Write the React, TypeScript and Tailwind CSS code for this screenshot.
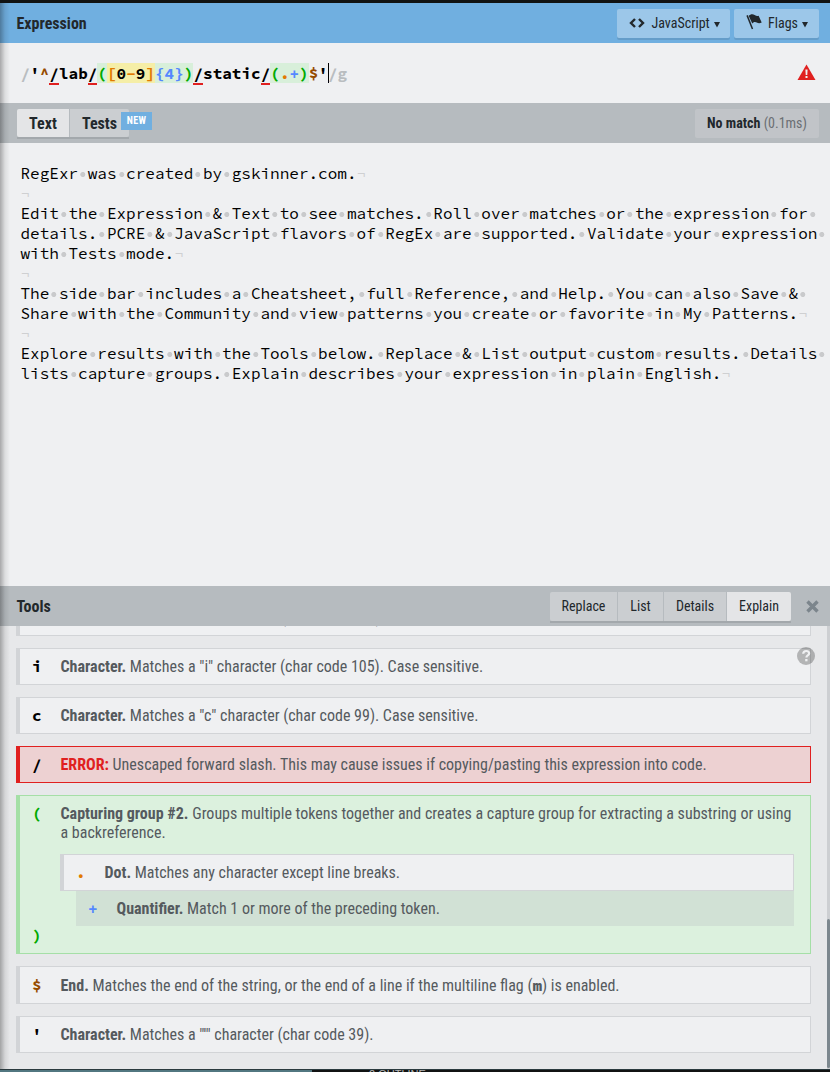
import type { ReactNode } from 'react';
import clsx from 'clsx';

const MONO = "font-['Source_Code_Pro','Noto_Sans_Mono_CJK_SC','Liberation_Mono',monospace] text-base";

const TEXT_LINES = [
  'RegExr was created by gskinner.com.¬',
  '¬',
  'Edit the Expression & Text to see matches. Roll over matches or the expression for ',
  'details. PCRE & JavaScript flavors of RegEx are supported. Validate your expression ',
  'with Tests mode.¬',
  '¬',
  'The side bar includes a Cheatsheet, full Reference, and Help. You can also Save & ',
  'Share with the Community and view patterns you create or favorite in My Patterns.¬',
  '¬',
  'Explore results with the Tools below. Replace & List output custom results. Details ',
  'lists capture groups. Explain describes your expression in plain English.¬',
];

type Token = { text: string; color: string; bg?: string; error?: boolean };

const TOKENS: Token[] = [
  { text: '/', color: 'text-[#b9bdc0]' },
  { text: "'", color: 'text-black' },
  { text: '^', color: 'text-[#964b00]' },
  { text: '/', color: 'text-black', error: true },
  { text: 'lab', color: 'text-black' },
  { text: '/', color: 'text-black', error: true },
  { text: '(', color: 'text-[#0a0]', bg: 'bg-[#d8efda]' },
  { text: '[', color: 'text-[#e17a00]', bg: 'bg-[#f5eea7]' },
  { text: '0', color: 'text-black', bg: 'bg-[#f5eea7]' },
  { text: '-', color: 'text-[#e17a00]', bg: 'bg-[#f5eea7]' },
  { text: '9', color: 'text-black', bg: 'bg-[#f5eea7]' },
  { text: ']', color: 'text-[#e17a00]', bg: 'bg-[#f5eea7]' },
  { text: '{4}', color: 'text-[#58f]', bg: 'bg-[#d8efda]' },
  { text: ')', color: 'text-[#0a0]', bg: 'bg-[#d8efda]' },
  { text: '/', color: 'text-black', error: true },
  { text: 'static', color: 'text-black' },
  { text: '/', color: 'text-black', error: true },
  { text: '(', color: 'text-[#0a0]', bg: 'bg-[#d8efda]' },
  { text: '.', color: 'text-[#e17a00]', bg: 'bg-[#d8efda]' },
  { text: '+', color: 'text-[#58f]', bg: 'bg-[#d8efda]' },
  { text: ')', color: 'text-[#0a0]', bg: 'bg-[#d8efda]' },
  { text: '$', color: 'text-[#964b00]' },
  { text: "'", color: 'text-black' },
];

function TextLine({ line }: { line: string }) {
  // visible whitespace: every space carries a small grey dot
  return (
    <div className="h-5 whitespace-pre">
      {line.split(/( |¬)/).map((part, i) => {
        if (part === ' ') {
          return (
            <span
              key={i}
              className="inline-block h-5 w-[9.6px] bg-[radial-gradient(circle_at_4.8px_11.5px,#c9cacc_2.1px,transparent_2.9px)] align-top"
            >
              {' '}
            </span>
          );
        }
        return (
          <span key={i} className={clsx('inline-block h-5 align-top', part === '¬' && 'text-[#cfd0d2]')}>
            {part}
          </span>
        );
      })}
    </div>
  );
}

interface ItemProps {
  token: string;
  tokenColor?: string;
  tone?: 'plain' | 'error' | 'group';
  className?: string;
  close?: string;
  nested?: ReactNode;
  children: ReactNode;
}

function Item({ token, tokenColor = 'text-black', tone = 'plain', className, close, nested, children }: ItemProps) {
  return (
    <div
      className={clsx(
        'shrink-0 border border-l-4 pb-2 pl-3',
        tone === 'plain' && 'border-[#d2d4d7] bg-[#eff0f2]',
        tone === 'error' && 'border-[#e02020] bg-[#edd1d2]',
        tone === 'group' && 'border-[#a5dfa7] bg-[#dcf1de]',
        className ?? 'pt-2',
      )}
    >
      <div className="flex">
        <Glyph color={tokenColor}>{token}</Glyph>
        <p className="flex-1 pr-4">{children}</p>
      </div>
      {nested}
      {close && <Glyph color={tokenColor}>{close}</Glyph>}
    </div>
  );
}

function Glyph({ color, children }: { color: string; children: ReactNode }) {
  return <div className={clsx('h-[19px] w-[28.5px] font-bold leading-[19px]', MONO, color)}>{children}</div>;
}

function Caret() {
  return (
    <svg width="6" height="7" viewBox="0 0 6 7" className="mt-0.5">
      <path d="M0 1h6L3 6.5z" fill="currentColor" />
    </svg>
  );
}

function Header() {
  return (
    <header className="flex h-10 items-center gap-1 bg-[#70afe0] pl-[16.5px] pr-[11px]">
      <h1 className="flex-1 pt-px text-base font-bold">Expression</h1>
      <button className="flex h-[29px] w-[113px] items-center rounded-xs bg-[#9cc7e9] pl-3 shadow-[0_2px_0_#659dc9]">
        <svg width="16" height="12" viewBox="0 0 16 12" className="mr-[6.5px]">
          <path d="M6 2 2 6l4 4M10 2l4 4-4 4" fill="none" stroke="currentColor" strokeWidth="2.4" />
        </svg>
        <span className="mr-1">JavaScript</span>
        <Caret />
      </button>
      <button className="flex h-[29px] w-[85px] items-center rounded-xs bg-[#9cc7e9] pl-3 shadow-[0_2px_0_#659dc9]">
        <svg width="16" height="16" viewBox="0 0 16 16" className="mb-0.5 mr-1.5">
          <path d="m.4 1.700 1.400-.6 5.400 13.600-1.400.6z" fill="currentColor" />
          <path d="M2.600 1.800C4.500-.2 7-.2 8.600.9s2.700 1.300 4 .8l3.100 6.800c-1.800 1-3.400.900-4.900.1S8.200 7.600 6.300 9.600z" fill="currentColor" />
        </svg>
        <span className="mr-1">Flags</span>
        <Caret />
      </button>
    </header>
  );
}

function ExpressionRow() {
  return (
    <section className="flex h-[60px] items-start justify-between pl-[20.5px] pr-[14.5px] pt-5">
      <div className={clsx('flex h-5 whitespace-pre font-bold leading-5', MONO)}>
        {TOKENS.map((t, i) => (
          <span key={i} className={clsx('h-5', t.color, t.bg, t.error && 'shadow-[0_2px_0_#e02020]')}>
            {t.text}
          </span>
        ))}
        <span className="-mr-px h-5 w-px bg-black" />
        <span className="text-[#b9bdc0]">/</span>
        <span className="text-[#b9bdc0]">g</span>
      </div>
      <svg width="19" height="17" viewBox="0 0 19 17" className="mt-px">
        <path d="M9.500.5 18.500 16H.5z" fill="#e02020" />
        <path d="M8.400 5.500h2.200l-.3 5.500H8.700zM8.500 12h2v2h-2z" fill="#eff0f2" />
      </svg>
    </section>
  );
}

function TextBar() {
  return (
    <div className="flex h-10 items-center justify-between bg-[#b6bbbf] pl-[17px] pr-[11px]">
      <div className="relative flex h-7 gap-px text-base font-bold shadow-[0_2px_0_#a3a8ac]">
        <div className="w-[52px] rounded-l-xs bg-[#e4e5e7] text-center leading-[29px]">Text</div>
        <div className="w-[59px] rounded-r-xs bg-[#cbced1] text-center leading-[29px]">Tests</div>
        <span className="absolute left-[104px] top-[3px] h-[18px] w-[31px] bg-[#70afe0] text-center text-[10px] leading-[18px] tracking-wide text-white">
          NEW
        </span>
      </div>
      <div className="h-[29px] w-[124px] rounded-xs bg-[#c1c4c8] text-center leading-[29px]">
        <b>No match</b> <span className="text-[#6b6f73]">(0.1ms)</span>
      </div>
    </div>
  );
}

function ToolsBar() {
  return (
    <div className="flex h-10 shrink-0 items-center bg-[#b6bbbf] pl-[16.5px] pr-[11px]">
      <h2 className="flex-1 pt-px text-base font-bold">Tools</h2>
      <div className="mr-[15px] flex h-[29px] gap-px text-center leading-[29px] shadow-[0_2px_0_#a3a8ac]">
        <div className="w-[67px] rounded-l-xs bg-[#cbced1]">Replace</div>
        <div className="w-[45px] bg-[#cbced1]">List</div>
        <div className="w-[62px] bg-[#cbced1]">Details</div>
        <div className="w-[64px] rounded-r-xs bg-[#e4e5e7]">Explain</div>
      </div>
      <svg width="13" height="13" viewBox="0 0 13 13">
        <path d="m1.500 1.500 10 10m0-10-10 10" stroke="#7c858c" strokeWidth="3.400" />
      </svg>
    </div>
  );
}

function Explain() {
  return (
    <section className="relative flex h-[443px] flex-col gap-3 overflow-hidden bg-[#e7e8ea] pl-4 pr-[19px] text-base leading-[19px] text-[#555a5e]">
      <Item token="t" className="-mt-[27px] pt-2">
        <b>Character.</b> Matches a "t" character (char code 116). Case sensitive.
      </Item>
      <Item token="i">
        <b>Character.</b> Matches a "i" character (char code 105). Case sensitive.
      </Item>
      <Item token="c">
        <b>Character.</b> Matches a "c" character (char code 99). Case sensitive.
      </Item>
      <Item token="/" tone="error">
        <b className="text-[#e02020]">ERROR:</b> Unescaped forward slash. This may cause issues if copying/pasting this
        expression into code.
      </Item>
      <Item
        token="("
        tokenColor="text-[#0a0]"
        tone="group"
        close=")"
        nested={
          <div className="ml-7 mr-4 mt-3">
            <Item token="." tokenColor="text-[#e17a00]">
              <b>Dot.</b> Matches any character except line breaks.
            </Item>
            <div className="ml-4 flex bg-[#d1e1d5] py-2 pl-3">
              <Glyph color="text-[#58f]">+</Glyph>
              <p>
                <b>Quantifier.</b> Match 1 or more of the preceding token.
              </p>
            </div>
          </div>
        }
      >
        <b>Capturing group #2.</b> Groups multiple tokens together and creates a capture group for extracting a
        substring or using a backreference.
      </Item>
      <Item token="$" tokenColor="text-[#964b00]" className="pt-[9px]">
        <b>End.</b> Matches the end of the string, or the end of a line if the multiline flag (
        <b className={clsx(MONO, 'leading-none')}>m</b>) is enabled.
      </Item>
      <Item token="'">
        <b>Character.</b> Matches a "'" character (char code 39).
      </Item>

      {/* help button floats over the list */}
      <svg width="18" height="18" viewBox="0 0 18 18" className="absolute right-[15px] top-[21px]">
        <circle cx="9" cy="9" r="9" fill="#000" fillOpacity=".25" />
        <path d="M6.200 6.800C6.300 4.900 7.500 4 9.200 4s2.900.9 2.900 2.400c0 2-2.700 2-2.700 4" fill="none" stroke="#eff0f2" strokeWidth="2.200" />
        <path d="M8.200 12h2.300v2.300H8.200z" fill="#eff0f2" />
      </svg>
      <div className="absolute right-0 top-0 h-full w-[3px] bg-[#cdcfd2]">
        <div className="mt-[293px] h-[149px] rounded-full bg-[#7c878e]" />
      </div>
    </section>
  );
}

export default function App() {
  return (
    <div className="flex h-[1072px] w-[830px] flex-col overflow-hidden bg-[#111313] pt-[3px] font-['Roboto_Condensed','Roboto',sans-serif] text-sm text-[#22282c] [font-stretch:75%]">
      <main className="relative flex h-[1066px] flex-col bg-[#eff0f2]">
        <Header />
        <ExpressionRow />
        <TextBar />
        <section className={clsx('h-[443px] pl-[20.5px] pt-5 leading-5 text-black', MONO)}>
          {TEXT_LINES.map((line, i) => (
            <TextLine key={i} line={line} />
          ))}
        </section>
        <ToolsBar />
        <Explain />
        {/* shadow cast by the sidebar */}
        <div className="absolute inset-y-0 left-0 w-2.5 bg-linear-to-r from-black/30 via-black/8 to-transparent" />
      </main>
      <footer className="flex h-[3px] overflow-hidden border-t border-[#2b3a3e]">
        <div className="w-[312px] bg-[#527780]" />
        <div className="-mt-px pl-[57px] font-['Liberation_Sans',sans-serif] text-[11px] leading-[11px] text-[#b5b5b5]">2 OUTLINE</div>
      </footer>
    </div>
  );
}
